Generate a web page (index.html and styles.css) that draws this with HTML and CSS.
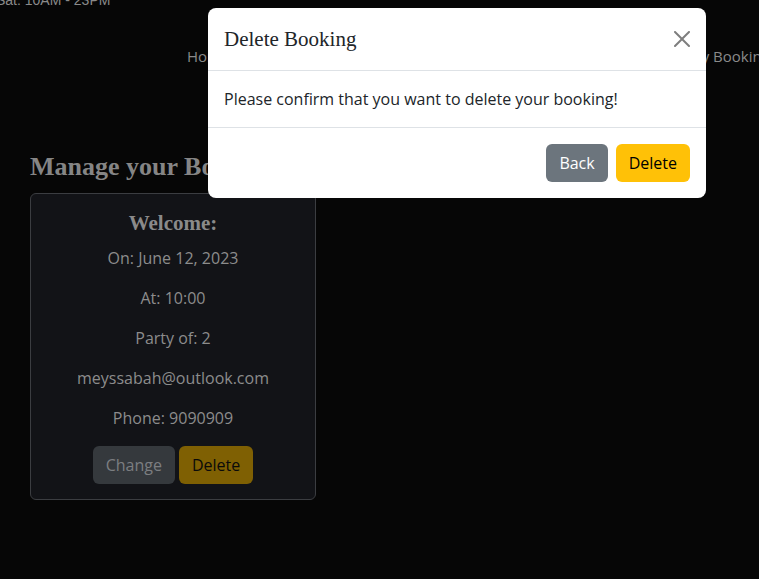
FILE: index.html
```html
<!DOCTYPE html>
<html lang="en">
<head>
<meta charset="utf-8">
<title>Manage your Booking</title>
<link rel="stylesheet" href="styles.css">
</head>
<body>
<div class="topbar">Sat: 10AM - 23PM</div>
<nav class="nav">
  <a href="#">Home</a>
  <a href="#">Menu</a>
  <a href="#">Book</a>
  <a href="#">My Bookings</a>
</nav>
<main class="main">
  <h2 class="page-title">Manage your Booking</h2>
  <section class="card">
    <h4 class="card-title">Welcome:</h4>
    <p>On: June 12, 2023</p>
    <p>At: 10:00</p>
    <p>Party of: 2</p>
    <p>meyssabah@outlook.com</p>
    <p>Phone: 9090909</p>
    <div class="card-actions">
      <button class="btn btn-change">Change</button>
      <button class="btn btn-dim-delete">Delete</button>
    </div>
  </section>
</main>

<div class="modal">
  <div class="modal-header">
    <h5 class="modal-title">Delete Booking</h5>
    <button class="btn-close" aria-label="Close">
      <svg viewBox="0 0 16 16" width="16" height="16"><path d="M.293.293a1 1 0 0 1 1.414 0L8 6.586 14.293.293a1 1 0 1 1 1.414 1.414L9.414 8l6.293 6.293a1 1 0 0 1-1.414 1.414L8 9.414l-6.293 6.293a1 1 0 0 1-1.414-1.414L6.586 8 .293 1.707a1 1 0 0 1 0-1.414z"/></svg>
    </button>
  </div>
  <div class="modal-body">Please confirm that you want to delete your booking!</div>
  <div class="modal-footer">
    <button class="btn btn-back">Back</button>
    <button class="btn btn-delete">Delete</button>
  </div>
</div>
</body>
</html>
```
FILE: styles.css
```css
* { box-sizing: border-box; }
html, body { margin: 0; padding: 0; }
body {
  background: #060606;
  color: #8c8c8c;
  font-family: "Open Sans", sans-serif;
  font-size: 16px;
  line-height: 1.5;
  width: 759px;
  height: 579px;
  overflow: hidden;
  position: relative;
}
.topbar {
  font-family: "Liberation Sans", Arial, sans-serif;
  font-size: 14px;
  line-height: 16px;
  margin-top: -8px;
  margin-left: -4px;
  color: #8a8a8a;
}
.nav {
  display: flex;
  justify-content: space-between;
  margin-left: 187px;
  width: 590px;
  margin-top: 38px;
  font-size: 15px;
  line-height: 20px;
}
.nav a { color: #8a8a8a; text-decoration: none; white-space: nowrap; }
.main { padding-left: 30px; padding-top: 82px; }
.page-title {
  font-family: "Liberation Serif", "Times New Roman", serif;
  font-weight: 700;
  font-size: 26px;
  line-height: 38px;
  margin: 0 0 7px;
  color: #858585;
  white-space: nowrap;
}
.card {
  width: 286px;
  background: #121317;
  border: 1px solid #3b3d41;
  border-radius: 6px;
  padding: 15px 16px 15px;
  text-align: center;
}
.card-title {
  font-family: "Liberation Serif", "Times New Roman", serif;
  font-weight: 700;
  font-size: 21px;
  line-height: 29px;
  margin: 0 0 8px;
  color: #8a8a8a;
}
.card p { margin: 0 0 16px; }
.card-actions { display: flex; justify-content: center; gap: 4px; }
.btn {
  font-family: "Open Sans", sans-serif;
  font-size: 16px;
  line-height: 24px;
  padding: 6px 12px;
  border: 1px solid transparent;
  border-radius: 6px;
  cursor: pointer;
}
.btn-change { background: #35393d; color: #7c7e81; }
.btn-dim-delete { background: #7f6003; color: #0a0a0a; }

.modal {
  position: absolute;
  left: 208px;
  top: 8px;
  width: 498px;
  background: #fff;
  border-radius: 8px;
  color: #212529;
  overflow: hidden;
}
.modal-header {
  display: flex;
  align-items: center;
  padding: 16px;
  border-bottom: 1px solid #dee2e6;
}
.modal-title {
  margin: 0;
  font-family: "Liberation Serif", "Times New Roman", serif;
  font-weight: 400;
  font-size: 21px;
  line-height: 30px;
}
.btn-close {
  margin: -8px -8px -8px auto;
  width: 32px;
  height: 32px;
  padding: 8px;
  border: 0;
  background: transparent;
  opacity: 0.5;
  display: flex;
}
.btn-close svg { fill: #000; }
.modal-body { padding: 16px; }
.modal-footer {
  display: flex;
  justify-content: flex-end;
  gap: 8px;
  padding: 16px;
  border-top: 1px solid #dee2e6;
}
.btn-back { background: #6c757d; color: #fff; }
.btn-delete { background: #ffc107; color: #000; }
```
